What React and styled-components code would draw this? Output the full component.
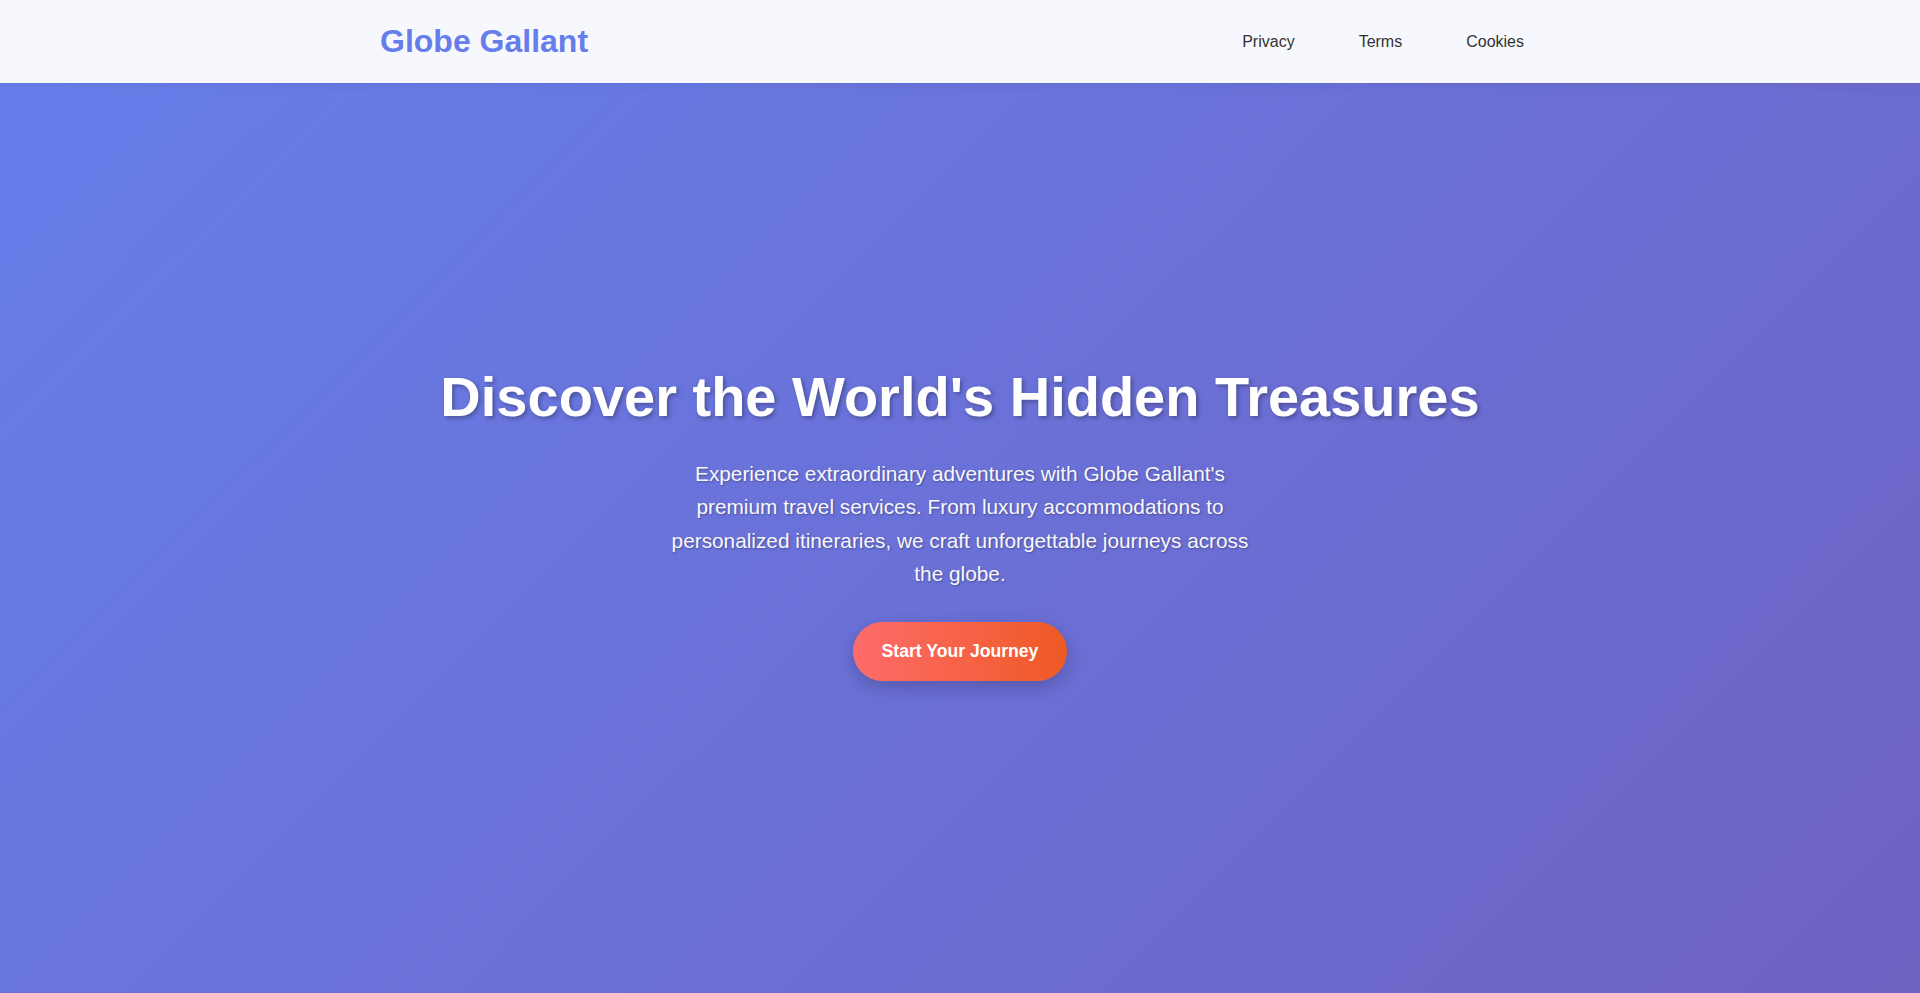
import React from "react";
import styled, { createGlobalStyle } from "styled-components";

const GlobalStyle = createGlobalStyle`
  * {
    margin: 0;
    padding: 0;
    box-sizing: border-box;
  }
  html, body {
    height: 100%;
  }
  body {
    font-family: "Liberation Sans", Arial, sans-serif;
    background: #6c6fd6;
    overflow: hidden;
  }
`;

const links = ["Privacy", "Terms", "Cookies"];

export default function App() {
  return (
    <>
      <GlobalStyle />
      <Page>
        <Header>
          <Container>
            <Logo href="#">Globe Gallant</Logo>
            <Nav>
              {links.map((l) => (
                <NavLink key={l} href="#">
                  {l}
                </NavLink>
              ))}
            </Nav>
          </Container>
        </Header>
        <Hero>
          <Title>Discover the World's Hidden Treasures</Title>
          <Lead>
            Experience extraordinary adventures with Globe Gallant's premium
            travel services. From luxury accommodations to personalized
            itineraries, we craft unforgettable journeys across the globe.
          </Lead>
          <CtaButton>Start Your Journey</CtaButton>
        </Hero>
      </Page>
    </>
  );
}

const Page = styled.div`
  min-height: 100vh;
  display: flex;
  flex-direction: column;
`;

const Header = styled.header`
  background: #f7f8fd;
  padding: 23px 0;
  box-shadow: 0 2px 10px rgba(0, 0, 0, 0.06);
  position: relative;
  z-index: 2;
`;

const Container = styled.div`
  max-width: 1200px;
  margin: 0 auto;
  padding: 0 20px;
  display: flex;
  align-items: center;
  justify-content: space-between;
`;

const Logo = styled.a`
  font-size: 32px;
  font-weight: 700;
  color: #667eea;
  text-decoration: none;
`;

const Nav = styled.nav`
  display: flex;
  gap: 32px;
`;

const NavLink = styled.a`
  padding: 8px 16px;
  font-size: 16px;
  color: #333;
  text-decoration: none;
`;

const Hero = styled.section`
  flex: 1;
  display: flex;
  flex-direction: column;
  align-items: center;
  justify-content: center;
  padding: 0 20px 32px;
  text-align: center;
  color: #fff;
  background: linear-gradient(135deg, #667eea 0%, #764ba2 185%);
`;

const Title = styled.h1`
  font-size: 56px;
  font-weight: 700;
  line-height: 1.2;
  margin-bottom: 27px;
  text-shadow: 2px 2px 4px rgba(0, 0, 0, 0.3);
`;

const Lead = styled.p`
  max-width: 600px;
  font-size: 20.8px;
  line-height: 1.6;
  margin-bottom: 32px;
  opacity: 0.95;
  text-shadow: 1px 1px 2px rgba(0, 0, 0, 0.3);
`;

const CtaButton = styled.button`
  font-family: inherit;
  font-size: 17.6px;
  font-weight: 700;
  color: #fff;
  border: none;
  border-radius: 50px;
  padding: 19px 29px;
  background: linear-gradient(90deg, #ff6b6b, #ee5a24);
  box-shadow: 0 6px 18px rgba(0, 0, 0, 0.2);
  cursor: pointer;
`;
